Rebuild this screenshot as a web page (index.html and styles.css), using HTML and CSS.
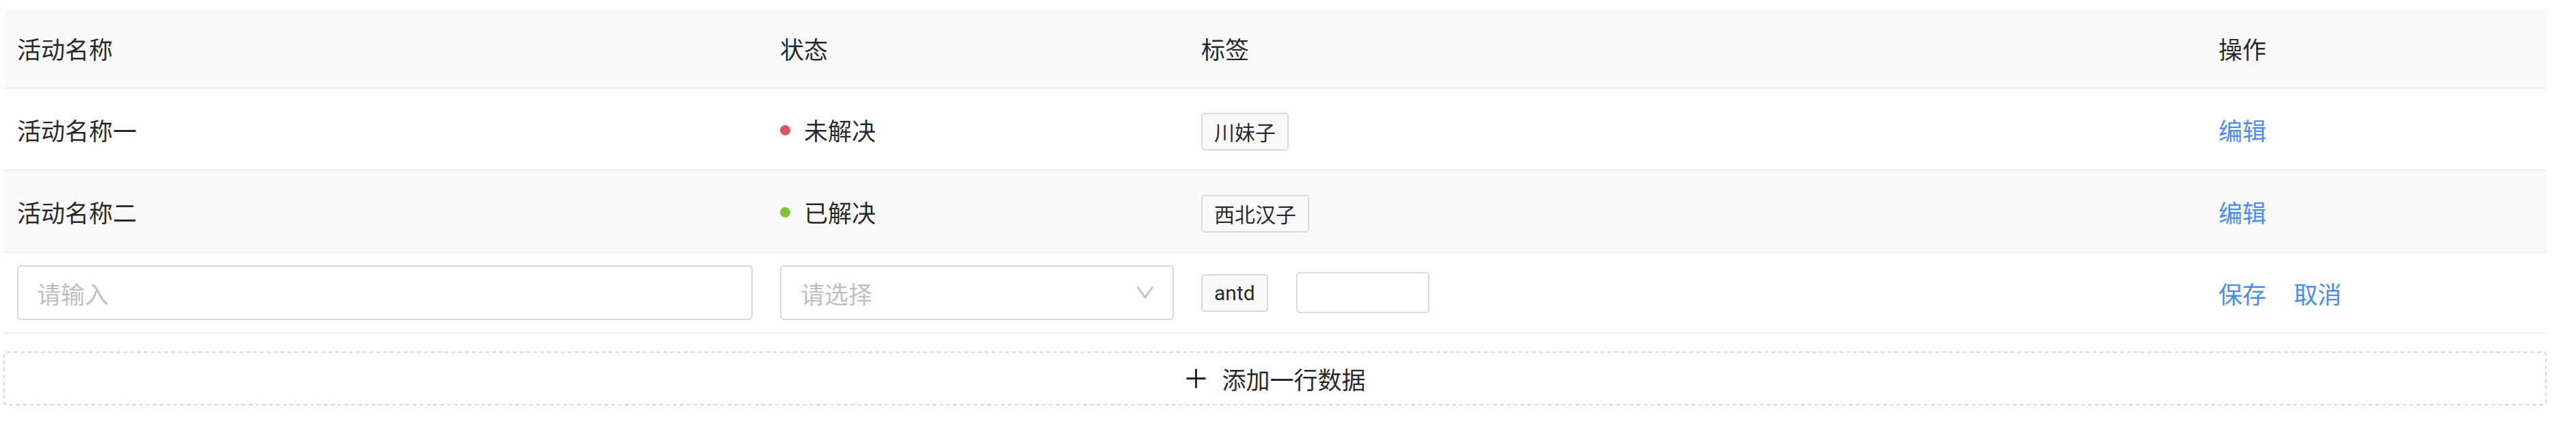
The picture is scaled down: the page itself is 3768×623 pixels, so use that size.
FILE: index.html
```html
<!DOCTYPE html>
<html lang="zh-CN">
<head>
<meta charset="utf-8">
<title>可编辑表格</title>
<link rel="stylesheet" href="styles.css">
</head>
<body>
<div class="page">
  <div class="table">
    <div class="row head">
      <div class="cell">活动名称</div>
      <div class="cell">状态</div>
      <div class="cell">标签</div>
      <div class="cell">操作</div>
    </div>
    <div class="row">
      <div class="cell">活动名称一</div>
      <div class="cell status"><span class="dot dot-error"></span>未解决</div>
      <div class="cell"><span class="tag">川妹子</span></div>
      <div class="cell actions"><a class="link">编辑</a></div>
    </div>
    <div class="row alt">
      <div class="cell">活动名称二</div>
      <div class="cell status"><span class="dot dot-success"></span>已解决</div>
      <div class="cell"><span class="tag">西北汉子</span></div>
      <div class="cell actions"><a class="link">编辑</a></div>
    </div>
    <div class="row edit">
      <div class="cell"><input class="input" type="text" placeholder="请输入"></div>
      <div class="cell">
        <div class="select">
          <span class="select-placeholder">请选择</span>
          <svg class="select-arrow" viewBox="64 64 896 896" width="30" height="30"><path d="M884 256h-75c-5.1 0-9.900 2.5-12.9 6.6L512 654.2 227.9 262.6c-3-4.1-7.8-6.6-12.9-6.6h-75c-6.5 0-10.3 7.4-6.5 12.7l352.6 486.1c12.8 17.6 39 17.6 51.7 0l352.6-486.1c3.9-5.3.1-12.7-6.4-12.7z"/></svg>
        </div>
      </div>
      <div class="cell tags"><span class="tag tag-latin">antd</span><input class="input-sm" type="text"></div>
      <div class="cell actions"><a class="link">保存</a><a class="link">取消</a></div>
    </div>
  </div>
  <button class="add" type="button">
    <svg class="plus" viewBox="64 64 896 896" width="35" height="35"><path d="M482 152h60q8 0 8 8v704q0 8-8 8h-60q-8 0-8-8V160q0-8 8-8z"/><path d="M192 474h672q8 0 8 8v60q0 8-8 8H160q-8 0-8-8v-60q0-8 8-8z"/></svg>
    <span>添加一行数据</span>
  </button>
</div>
</body>
</html>
```

FILE: styles.css
```css
* { box-sizing: border-box; }

html, body {
  margin: 0;
  background: #ffffff;
}

body {
  font-family: "Noto Sans CJK SC", Roboto, sans-serif;
  font-size: 35px;
  line-height: 55px;
  color: rgba(0, 0, 0, 0.85);
}

.page {
  padding: 13px 43px 0 5px;
}

.table {
  width: 3720px;
}

.row {
  display: grid;
  grid-template-columns: 1116px 616px 1488px 500px;
  align-items: center;
  height: 120px;
  border-bottom: 2px solid #f0f0f0;
}

.row.head {
  height: 117px;
  background: #fafafa;
  border-radius: 5px 5px 0 0;
}

.row.alt {
  background: #fafafa;
}

.row.edit {
  height: 118px;
}

.cell {
  padding: 0 20px;
  white-space: nowrap;
}

.status {
  display: flex;
  align-items: center;
}

.dot {
  display: inline-block;
  width: 15px;
  height: 15px;
  border-radius: 50%;
  margin-right: 20px;
  margin-top: 3px;
}

.dot-error { background: #e2505a; }
.dot-success { background: #7ec432; }

.tag {
  display: inline-block;
  height: 55px;
  padding: 0 17px;
  font-size: 30px;
  line-height: 51px;
  background: #fafafa;
  border: 2px solid #d9d9d9;
  border-radius: 5px;
  vertical-align: middle;
}

.tags {
  display: flex;
  align-items: center;
}

.tag-latin {
  font-family: Roboto, "Noto Sans CJK SC", sans-serif;
  margin-right: 41px;
}

.input-sm {
  width: 195px;
  height: 60px;
  border: 2px solid #d9d9d9;
  border-radius: 5px;
  background: #ffffff;
  font: inherit;
  padding: 0 17px;
  outline: none;
}

.input {
  display: block;
  width: 100%;
  height: 80px;
  padding: 0 27px;
  border: 2px solid #d9d9d9;
  border-radius: 5px;
  background: #ffffff;
  font: inherit;
  color: rgba(0, 0, 0, 0.85);
  outline: none;
}

.input::placeholder {
  color: #bfbfbf;
}

.select {
  display: flex;
  align-items: center;
  justify-content: space-between;
  height: 80px;
  padding: 0 25px 0 28px;
  border: 2px solid #d9d9d9;
  border-radius: 5px;
  background: #ffffff;
}

.select-placeholder {
  color: #bfbfbf;
}

.select-arrow {
  fill: #bfbfbf;
  display: block;
}

.actions {
  display: flex;
  gap: 40px;
}

.link {
  color: #4a8cff;
  cursor: pointer;
}

.add {
  display: flex;
  align-items: center;
  justify-content: center;
  width: 3720px;
  height: 79px;
  margin-top: 26px;
  padding: 0;
  background: #ffffff;
  border: 2px dashed #d9d9d9;
  border-radius: 5px;
  font: inherit;
  color: rgba(0, 0, 0, 0.85);
  cursor: pointer;
}

.plus {
  display: block;
  fill: rgba(0, 0, 0, 0.85);
  margin-right: 20px;
}
```
